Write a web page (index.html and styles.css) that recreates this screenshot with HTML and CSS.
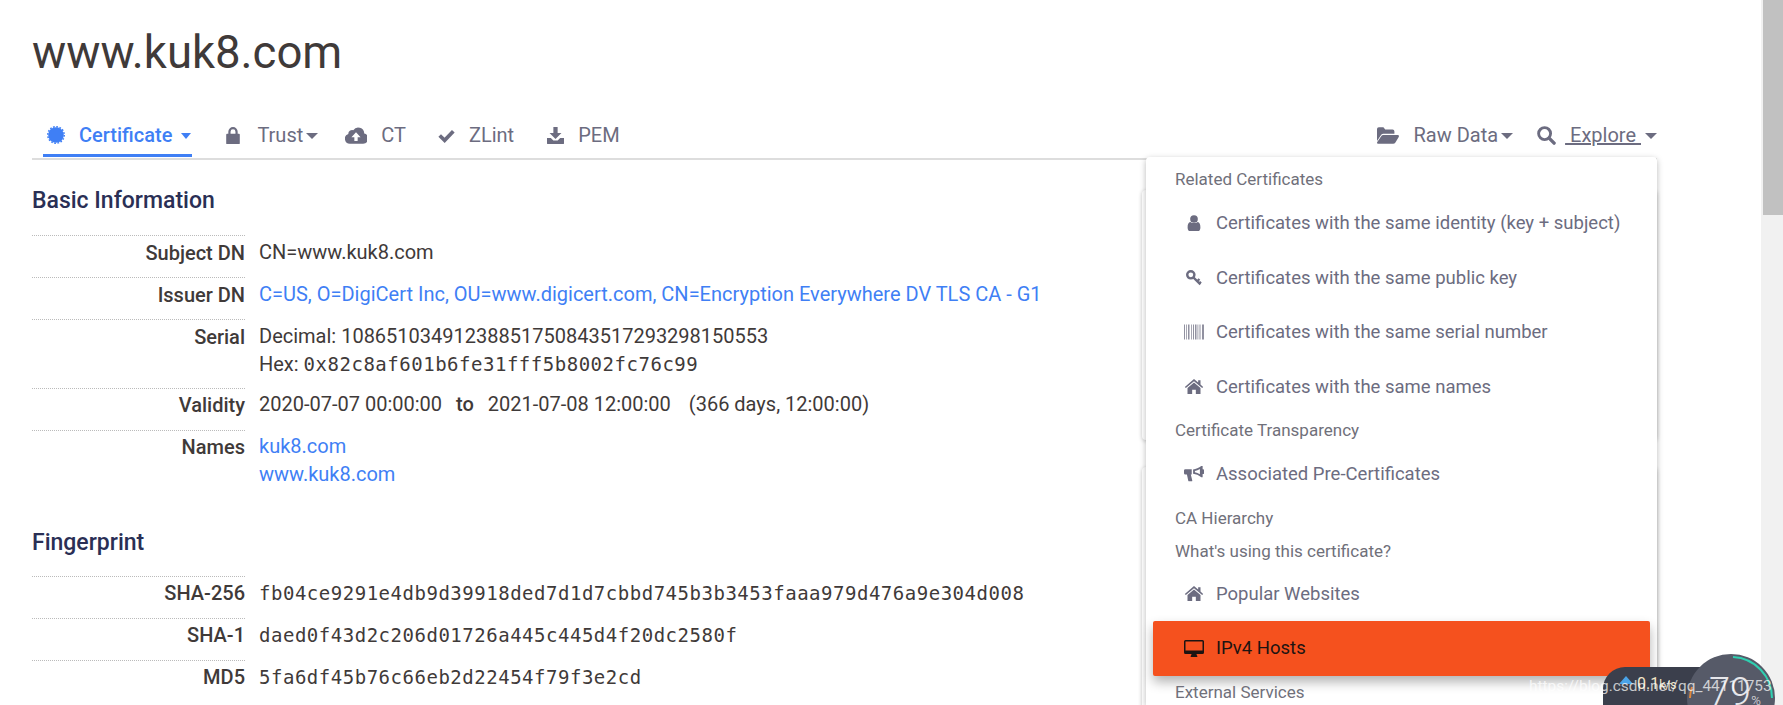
FILE: index.html
```html
<!DOCTYPE html>
<html lang="en">
    <head>
        <meta charset="UTF-8">
        <title>www.kuk8.com</title>
        <link rel="stylesheet" href="styles.css">
    </head>
    <body>
        <svg class="defs" width="0" height="0">
            <symbol id="i-cert" viewBox="0 0 24 24"><circle cx="12" cy="12" r="10.400" fill="currentColor"/><circle cx="12" cy="12" r="11" fill="none" stroke="currentColor" stroke-width="2" stroke-dasharray="2.300 2.020"/></symbol>
            <symbol id="i-lock" viewBox="0 0 16 20"><path fill="currentColor" d="M1 8h14a1 1 0 0 1 1 1v10a1 1 0 0 1-1 1H1a1 1 0 0 1-1-1V9a1 1 0 0 1 1-1z"/><path fill="none" stroke="currentColor" stroke-width="2.600" d="M3.800 9V5.600a4.200 4.200 0 0 1 8.400 0V9"/></symbol>
            <symbol id="i-cloud" viewBox="0 0 24 18"><path fill="currentColor" fill-rule="evenodd" d="M5.500 18A5.500 5.500 0 0 1 3.600 7.300 4.200 4.200 0 0 1 9 3.200 6.600 6.600 0 0 1 21 6.800a5.700 5.700 0 0 1-1.800 11.200zM12 5.500 7 11h3.200v4h3.600v-4H17z"/></symbol>
            <symbol id="i-check" viewBox="0 0 20 16"><path fill="none" stroke="currentColor" stroke-width="4.400" d="M2 8l5.800 5.600L18 3"/></symbol>
            <symbol id="i-download" viewBox="0 0 20 20"><path fill="currentColor" d="M7.500 0h5v7H17l-7 7-7-7h4.500zM0 13h4.500l3 3h5l3-3H20v6a1 1 0 0 1-1 1H1a1 1 0 0 1-1-1z"/></symbol>
            <symbol id="i-folder" viewBox="0 0 24 18"><path fill="currentColor" d="M0 15V2a2 2 0 0 1 2-2h5l2 2.500h8a2 2 0 0 1 2 2V7H7a3 3 0 0 0-2.600 1.500z"/><path fill="currentColor" d="M7 8.500h15.500c1.200 0 1.800 1 1.200 2l-3.600 6a3 3 0 0 1-2.600 1.500H1.500c-1.200 0-1.800-1-1.200-2l4.100-6A3 3 0 0 1 7 8.500z"/></symbol>
            <symbol id="i-search" viewBox="0 0 20 20"><circle cx="8" cy="8" r="6.300" fill="none" stroke="currentColor" stroke-width="3"/><path stroke="currentColor" stroke-width="3.600" stroke-linecap="round" d="M13 13l5 5"/></symbol>
            <symbol id="i-user" viewBox="0 0 16 20"><circle cx="8" cy="5" r="4.800" fill="currentColor"/><path fill="currentColor" d="M3.400 8.600C5.800 10.600 10.200 10.600 12.600 8.600 15 9 16 11.500 16 15.500 16 18.500 14.800 20 13 20H3C1.200 20 0 18.500 0 15.500 0 11.500 1 9 3.400 8.600z"/></symbol>
            <symbol id="i-key" viewBox="0 0 20 20"><circle cx="6" cy="6" r="4.500" fill="none" stroke="currentColor" stroke-width="3"/><path fill="none" stroke="currentColor" stroke-width="2.800" d="M9.500 9.500l8.500 8.500M14 14l2.800-2.800M16.700 16.700l2-2"/></symbol>
            <symbol id="i-barcode" viewBox="0 0 20 15"><path fill="currentColor" opacity=".75" d="M0 0h1v15H0zM2.200 0h.8v15h-.8zM4 0h1.500v15H4zM7 0h.8v15H7zM9 0h1v15H9zM11 0h1.500v15H11zM13.500 0h.8v15h-.8zM15.500 0h1v15h-1zM18 0h2v15h-2z"/></symbol>
            <symbol id="i-home" viewBox="0 0 22 18"><path fill="currentColor" d="M11 0l5 4.300V1.500h2.800v5.200L22 9.500l-1.200 1.400L11 2.600 1.200 10.900 0 9.500z"/><path fill="currentColor" d="M11 4.200l7.800 6.600V18h-5.600v-5H8.800v5H3.200v-7.200z"/></symbol>
            <symbol id="i-horn" viewBox="0 0 22 20" preserveAspectRatio="none"><path fill="currentColor" d="M19 0h1.500v4a3 3 0 0 1 0 6v4H19c-2.500-2.300-6-4-9-4.300V4.300C13 4 16.500 2.300 19 0zM17.500 3.800C15.800 5 13.800 5.800 12 6.100v1.800c1.800.3 3.800 1.100 5.500 2.300zM0 5.500a1.500 1.500 0 0 1 1.500-1.500h7v6.500h-1l1.600 7.500a1 1 0 0 1-1 1.200H5.700a1 1 0 0 1-1-.8L3.200 10.500H1.500A1.500 1.500 0 0 1 0 9z"/></symbol>
            <symbol id="i-desktop" viewBox="0 0 20 17"><path fill="currentColor" fill-rule="evenodd" d="M1.500 0h17A1.500 1.500 0 0 1 20 1.500v11a1.500 1.500 0 0 1-1.500 1.500H12.500c0 .8.300 1.400.8 2v1H6.700v-1c.5-.6.8-1.200.8-2H1.500A1.500 1.500 0 0 1 0 12.500v-11A1.500 1.500 0 0 1 1.500 0zM1.500 1.500v9h17v-9z"/></symbol>
        </svg>

        <div class="page">
            <div class="container">
                <h1 class="title">www.kuk8.com</h1>

                <div class="nav">
                    <div class="tabs">
                        <a class="tab active" href="#"><svg class="ico w18 h18"><use href="#i-cert"/></svg>Certificate<span class="caret gap"></span></a>
                        <a class="tab trust" href="#"><svg class="ico w20"><use href="#i-lock"/></svg>Trust<span class="caret"></span></a>
                        <a class="tab ct" href="#"><svg class="ico w22"><use href="#i-cloud"/></svg>CT</a>
                        <a class="tab zlint" href="#"><svg class="ico w17"><use href="#i-check"/></svg>ZLint</a>
                        <a class="tab" href="#"><svg class="ico w17"><use href="#i-download"/></svg>PEM</a>
                    </div>
                    <div class="tabs">
                        <a class="tab" href="#"><svg class="ico w22"><use href="#i-folder"/></svg>Raw Data<span class="caret"></span></a>
                        <a class="tab explore" href="#"><svg class="ico w19 h19"><use href="#i-search"/></svg><u>&nbsp;Explore&nbsp;</u><span class="caret gap"></span></a>
                    </div>
                </div>

                <div class="content">
                    <div class="main">
                        <h2>Basic Information</h2>
                        <div class="row"><div class="label">Subject DN</div><div class="value">CN=www.kuk8.com</div></div>
                        <div class="row"><div class="label">Issuer DN</div><div class="value"><a href="#">C=US, O=DigiCert Inc, OU=www.digicert.com, CN=Encryption Everywhere DV TLS CA - G1</a></div></div>
                        <div class="row serial"><div class="label">Serial</div><div class="value">Decimal: 10865103491238851750843517293298150553<br>Hex: <span class="mono">0x82c8af601b6fe31fff5b8002fc76c99</span></div></div>
                        <div class="row"><div class="label">Validity</div><div class="value">2020-07-07 00:00:00 <b class="to">to</b> 2021-07-08 12:00:00 <span class="days">(366 days, 12:00:00)</span></div></div>
                        <div class="row"><div class="label">Names</div><div class="value"><a href="#">kuk8.com</a><br><a href="#">www.kuk8.com</a></div></div>

                        <h2 class="second">Fingerprint</h2>
                        <div class="row"><div class="label">SHA-256</div><div class="value mono">fb04ce9291e4db9d39918ded7d1d7cbbd745b3b3453faaa979d476a9e304d008</div></div>
                        <div class="row"><div class="label">SHA-1</div><div class="value mono">daed0f43d2c206d01726a445c445d4f20dc2580f</div></div>
                        <div class="row"><div class="label">MD5</div><div class="value mono">5fa6df45b76c66eb2d22454f79f3e2cd</div></div>
                    </div>
                    <div class="side">
                        <div class="card first"></div>
                        <div class="card"></div>
                    </div>
                </div>

                <div class="menu">
                    <div class="menu-head">Related Certificates</div>
                    <a class="item" href="#"><svg class="ico"><use href="#i-user"/></svg>Certificates with the same identity (key + subject)</a>
                    <a class="item" href="#"><svg class="ico"><use href="#i-key"/></svg>Certificates with the same public key</a>
                    <a class="item" href="#"><svg class="ico"><use href="#i-barcode"/></svg>Certificates with the same serial number</a>
                    <a class="item" href="#"><svg class="ico home"><use href="#i-home"/></svg>Certificates with the same names</a>
                    <div class="menu-head">Certificate Transparency</div>
                    <a class="item" href="#"><svg class="ico"><use href="#i-horn"/></svg>Associated Pre-Certificates</a>
                    <div class="menu-head">CA Hierarchy</div>
                    <div class="menu-head sub">What's using this certificate?</div>
                    <a class="item" href="#"><svg class="ico home"><use href="#i-home"/></svg>Popular Websites</a>
                    <a class="item on" href="#"><svg class="ico screen"><use href="#i-desktop"/></svg>IPv4 Hosts</a>
                    <div class="menu-head">External Services</div>
                </div>
            </div>
            <div class="scrollbar"><div class="thumb"></div></div>
        </div>

        <div class="meter">
            <span class="speed"><i class="up"></i>0.1<small>k/s</small></span>
            <div class="dial">
                <svg class="arc" viewBox="0 0 88 88"><path fill="none" stroke="#2fcfb0" stroke-width="2" d="M46 3A41 41 0 0 1 85 44"/><path fill="none" stroke="#e0883c" stroke-width="2" d="M5 33A41 41 0 0 0 3 44"/></svg>
                <span class="pct">79<small>%</small></span>
            </div>
        </div>
        <div class="watermark">https://blog.csdn.net/qq_44111753</div>
    </body>
</html>
```

FILE: styles.css
```css
*{
    padding: 0px;
    margin: 0px;
    box-sizing: border-box;
}
html,body{
    height: 705px;
    overflow: hidden;
}
body{
    font-family: Roboto, "Liberation Sans", sans-serif;
    font-size: 20px;
    line-height: 28px;
    color: #3f3a39;
    background: #fff;
    position: relative;
}
a{
    color: #3f7ff5;
    text-decoration: none;
}
.defs{
    position: absolute;
}
.page{
    display: flex;
    justify-content: space-between;
    height: 705px;
}
.container{
    width: 1657px;
    padding-left: 32px;
    position: relative;
}
.scrollbar{
    width: 22px;
    background: #f1f1f1;
    padding-left: 2px;
}
.thumb{
    height: 215px;
    background: #c1c1c1;
}
.title{
    font-size: 45.5px;
    font-weight: 400;
    line-height: 52px;
    padding-top: 27px;
    height: 106px;
    color: #3f3a39;
}

/* tabs */
.nav{
    display: flex;
    justify-content: space-between;
    height: 54px;
    border-bottom: 2px solid #ddd;
}
.tabs{
    display: flex;
}
.tab{
    display: flex;
    align-items: center;
    height: 51px;
    padding: 7px 4px 0;
    margin-left: 25px;
    color: #6c6c80;
    gap: 14px;
}
.tabs:first-child .tab:first-child{
    margin-left: 11px;
}
.tab.active{
    color: #3f7ff5;
    font-weight: 500;
    border-bottom: 3px solid #3f7ff5;
    padding: 10px 1px 0 4px;
}
.tab.trust{
    margin-left: 27px;
    padding-right: 0;
}
.tab.ct{
    margin-left: 23px;
}
.tab.zlint{
    margin-left: 24px;
}
.ico{
    height: 17px;
    flex: none;
}
.w17{ width: 17px; }
.w18{ width: 18px; }
.w19{ width: 19px; }
.w20{ width: 20px; }
.w22{ width: 22px; }
.h18{ height: 18px; }
.h19{ height: 19px; }
.caret{
    width: 0;
    height: 0;
    border-left: 6px solid transparent;
    border-right: 6px solid transparent;
    border-top: 6px solid currentColor;
    margin-left: -11px;
    margin-top: 2px;
}
.caret.gap{
    margin-left: -5px;
}
.tab.active .caret{
    border-left-width: 5px;
    border-right-width: 5px;
}
.tab.explore{
    gap: 9px;
    margin-left: 16px;
    padding-right: 0;
}

/* info rows */
.content{
    display: flex;
    justify-content: space-between;
}
.main{
    width: 1100px;
}
h2{
    font-size: 23px;
    font-weight: 500;
    line-height: 28px;
    color: #2a2f55;
    padding-top: 27px;
    height: 75px;
}
h2.second{
    height: 77px;
    padding-top: 30px;
}
.row{
    display: flex;
    gap: 14px;
}
.label{
    width: 213px;
    flex: none;
    text-align: right;
    font-weight: 500;
    border-top: 1px dotted #bbb;
    padding: 2.5px 0 10.5px;
}
.value{
    padding: 2.5px 0 10.5px;
}
.row.serial .value{
    padding-bottom: 10px;
}
.mono{
    font-family: "DejaVu Sans Mono", "Liberation Mono", monospace;
    font-size: 19px;
    letter-spacing: .52px;
}
.value.mono{
    padding: 3.5px 0 9.5px;
}
.to{
    font-weight: 500;
    margin: 0 9px;
}
.days{
    margin-left: 13px;
}

/* cards behind the menu */
.side{
    width: 515px;
}
.card{
    height: 250px;
    margin-bottom: 27px;
    border-radius: 4px;
    box-shadow: 0 1px 4px rgba(0,0,0,.22);
}
.card.first{
    margin-top: 30px;
}

/* explore menu */
.menu{
    position: absolute;
    left: 1146px;
    top: 157px;
    width: 511px;
    height: 548px;
    padding: 6px 7px 0;
    background: #fff;
    border-radius: 4px 4px 0 0;
    box-shadow: 0 2px 6px rgba(0,0,0,.28);
}
.menu-head{
    height: 33px;
    line-height: 33px;
    padding-left: 22px;
    font-size: 17px;
    color: #70707a;
}
.menu-head.sub{
    height: 32px;
    line-height: 32px;
}
.item{
    display: flex;
    align-items: center;
    gap: 12px;
    height: 54.5px;
    padding-left: 31px;
    font-size: 18.5px;
    color: #6c6c80;
}
.item .ico{
    width: 20px;
    height: 16px;
}
.item .ico.home{
    height: 15px;
}
.item .ico.screen{
    height: 17px;
}
.item.on{
    background: #f5511e;
    color: #1c1412;
    border-radius: 2px;
    box-shadow: 0 6px 12px rgba(0,0,0,.3);
}

/* floating speed meter */
.meter{
    position: absolute;
    left: 1603px;
    top: 654px;
    width: 172px;
    height: 51px;
    overflow: hidden;
}
.speed{
    position: absolute;
    left: 0;
    top: 13px;
    width: 100px;
    height: 38px;
    border-radius: 22px 0 0 0;
    background: #3b3f4c;
    color: #f3e6c8;
    font-size: 16px;
    line-height: 22px;
    padding: 6px 0 0 34px;
}
.speed small{
    font-size: 12px;
}
.up{
    position: absolute;
    left: 16px;
    top: 9px;
    border-left: 7px solid transparent;
    border-right: 7px solid transparent;
    border-bottom: 8px solid #4aa3e8;
}
.dial{
    position: absolute;
    left: 84px;
    top: 0;
    width: 88px;
    height: 88px;
    border-radius: 50%;
    background: #565a68;
}
.arc{
    position: absolute;
    left: 0;
    top: 0;
    width: 88px;
    height: 88px;
}
.pct{
    position: absolute;
    left: 22px;
    top: 16px;
    font-size: 38px;
    font-weight: 300;
    line-height: 44px;
    color: #e6e6ea;
}
.pct small{
    font-size: 13px;
}
.watermark{
    position: absolute;
    left: 1529px;
    top: 674px;
    font-size: 15.4px;
    line-height: 24px;
    color: rgba(255,255,255,.72);
}
```
